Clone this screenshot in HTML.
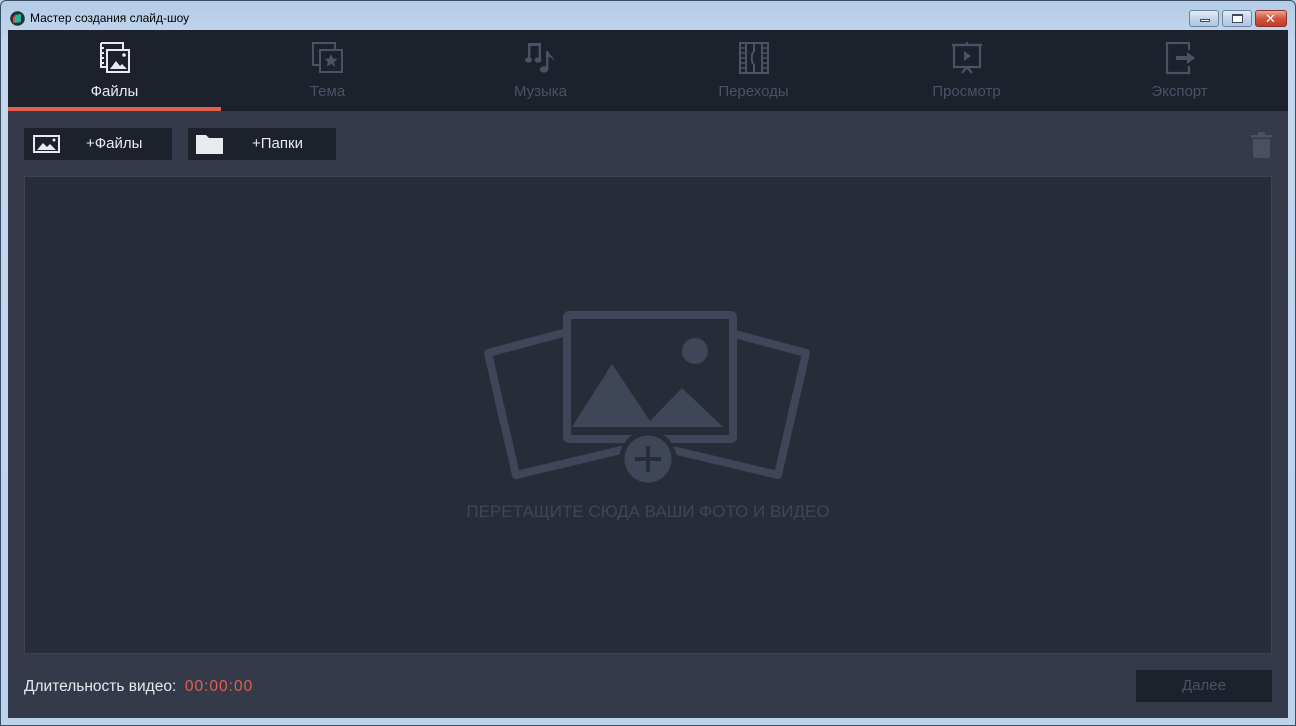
<!DOCTYPE html>
<html><head><meta charset="utf-8"><style>
*{margin:0;padding:0;box-sizing:border-box}
body{width:1296px;height:726px;overflow:hidden;background:#b9d1ea;font-family:"Liberation Sans","DejaVu Sans",sans-serif;position:relative}
.frame{position:absolute;left:0;top:0;width:1296px;height:726px;background:linear-gradient(#b4cce6,#c3d7ee 40px,#bcd3ec);border:1px solid #3c4e66;border-radius:6px 6px 0 0}
.title{position:absolute;left:30px;top:11px;font-size:12px;color:#000}
.app{position:absolute;left:8px;top:30px;width:1280px;height:688px;background:#343a4a}
.hdr{position:absolute;left:0;top:0;width:1280px;height:81px;background:#1d212b}
.tab{position:absolute;top:0;width:213px;height:81px;text-align:center}
.tab svg{position:absolute;left:50%;top:10px;margin-left:-18px}
.tab span{position:absolute;left:0;right:0;top:53px;font-size:15px;color:#4a5266}
.tab.act span{color:#e8eaf0}
.ul{position:absolute;left:0;top:77px;width:213px;height:4px;background:#e4604c}
.btn{position:absolute;top:98px;height:32px;background:#1d212b;color:#e8eaf0;font-size:15px}
.drop{position:absolute;left:16px;top:146px;width:1248px;height:478px;background:#272c38;border:1px solid #3d4352}
.cap{position:absolute;left:0;right:0;top:325px;text-align:center;font-size:17px;color:#3f4658}
.wb{position:absolute;top:10px;height:17px;border:1px solid #6d84a3;border-radius:3px;background:linear-gradient(#e4edf7,#c4d4e8 50%,#b1c6df)}
</style></head><body>
<div class="frame"></div>
<svg style="position:absolute;left:10px;top:11px" width="15" height="15" viewBox="0 0 15 15"><circle cx="7.5" cy="7.5" r="7.3" fill="#2a3038"/><path d="M5 4l6-1v8l-6 1z" fill="#1fb89a"/><path d="M3 6l2-1v6l-2 1z" fill="#e0503c"/></svg>
<div class="title">Мастер создания слайд-шоу</div>
<div class="wb" style="left:1189px;width:30px"><div style="position:absolute;left:10px;top:8px;width:10px;height:3px;border:1px solid #3a4a60;background:#fff"></div></div>
<div class="wb" style="left:1222px;width:30px"><div style="position:absolute;left:9px;top:3px;width:11px;height:9px;border:1px solid #3a4a60;border-top-width:2px;background:#fff"></div></div>
<div class="wb" style="left:1255px;width:32px;border-color:#8a3328;background:linear-gradient(#e8a89a,#d2543e 50%,#c23c26)"><div style="position:absolute;left:9px;top:0;color:#fff;font-weight:bold;font-size:13px">✕</div></div>
<div class="app">
 <div class="hdr">
  <div class="tab act" style="left:0"><svg width="36" height="36" viewBox="0 0 36 36" fill="none" stroke="#e8eaf0" stroke-width="2"><path d="M4 3h22v6M4 3v24h6M4 8h3M4 13h3M4 18h3M4 23h3M26 3v6"/><rect x="10" y="10" width="22" height="22"/><path d="M13 29l6-8 4 5 2-2 5 5z" fill="#e8eaf0" stroke="none"/><circle cx="27" cy="15" r="1.8" fill="#e8eaf0" stroke="none"/></svg><span>Файлы</span></div>
  <div class="tab" style="left:213px"><svg width="36" height="36" viewBox="0 0 36 36" fill="none" stroke="#4a5266" stroke-width="2"><path d="M25 10V3H3v22h7"/><rect x="10" y="10" width="22" height="22"/><path d="M21 14l2 4.5 4.8.4-3.7 3.1 1.2 4.7L21 24l-4.3 2.7 1.2-4.7-3.7-3.1 4.8-.4z" fill="#4a5266" stroke="none"/></svg><span>Тема</span></div>
  <div class="tab" style="left:426px"><svg width="36" height="36" viewBox="0 0 36 36" fill="#4a5266"><path d="M5 3h13v16h-2.4V6H7.4v13H5z"/><ellipse cx="5.5" cy="20" rx="3.5" ry="2.6"/><ellipse cx="15" cy="20" rx="3.5" ry="2.6"/><path d="M23 11h2.4c0 4 6 5 5 10-1-3-3-4-5-4v12H23z"/><ellipse cx="21" cy="29.5" rx="4.2" ry="3.2"/></svg><span>Музыка</span></div>
  <div class="tab" style="left:639px"><svg width="36" height="36" viewBox="0 0 36 36" fill="none" stroke="#4a5266" stroke-width="2"><rect x="4" y="3" width="28" height="30"/><path d="M10 3v30M26 3v30M18 3v9M18 24v9M18 12c-3 0-3 12 0 12" /><path d="M4 8h6M4 13h6M4 18h6M4 23h6M4 28h6M26 8h6M26 13h6M26 18h6M26 23h6M26 28h6" stroke-width="1.5"/></svg><span>Переходы</span></div>
  <div class="tab" style="left:852px"><svg width="36" height="36" viewBox="0 0 36 36" fill="none" stroke="#4a5266" stroke-width="2.2"><path d="M3 5h30M18 2v3"/><rect x="5" y="5" width="26" height="22"/><path d="M15 11l7 5-7 5z" fill="#4a5266" stroke="none"/><path d="M18 27l-5 6M18 27l5 6"/></svg><span>Просмотр</span></div>
  <div class="tab" style="left:1065px"><svg width="36" height="36" viewBox="0 0 36 36" fill="none" stroke="#4a5266" stroke-width="2.2"><path d="M27 10V3H5v30h22v-7"/><path d="M14 18h12" stroke-width="4"/><path d="M25 12l8 6-8 6z" fill="#4a5266" stroke="none"/></svg><span>Экспорт</span></div>
  <div class="ul"></div>
 </div>
 <div class="btn" style="left:16px;width:148px"><svg style="position:absolute;left:9px;top:7px" width="27" height="18" viewBox="0 0 27 18" fill="none" stroke="#e8eaf0" stroke-width="2"><rect x="1" y="1" width="25" height="16"/><path d="M4 15l6-7 4 4 3-3 6 6z" fill="#e8eaf0" stroke="none"/><circle cx="21" cy="5" r="1.5" fill="#e8eaf0" stroke="none"/></svg><span style="position:absolute;left:62px;top:7px">+Файлы</span></div>
 <div class="btn" style="left:180px;width:148px"><svg style="position:absolute;left:8px;top:6px" width="27" height="20" viewBox="0 0 27 20"><path d="M0 1h10l3 3h14v16H0z" fill="#e8eaf0"/></svg><span style="position:absolute;left:64px;top:7px">+Папки</span></div>
 <svg style="position:absolute;left:1243px;top:102px" width="22" height="26" viewBox="0 0 22 26" fill="#4a5064"><rect x="0" y="3" width="21" height="2.5"/><rect x="7" y="0" width="7" height="3"/><path d="M2 7h17v17l-1 2H3l-1-2z"/></svg>
 <div class="drop">
  <svg style="position:absolute;left:454px;top:133px" width="336" height="178" viewBox="0 0 336 178" fill="none" stroke="#3f4658" stroke-width="8" stroke-linejoin="round">
   <path d="M88 22L9 43l28 122 139-33"/>
   <path d="M248 22l79 21-28 122-139-33"/>
   <rect x="88" y="5" width="166" height="124" rx="2" fill="#272c38"/>
   <path d="M93 117l40-63 38 57 32-33 41 39z" fill="#3f4658" stroke="none"/>
   <circle cx="216" cy="41" r="13" fill="#3f4658" stroke="none"/>
   <circle cx="169" cy="149" r="26" fill="#3f4658" stroke="#272c38" stroke-width="5"/>
   <path d="M169 136v26M156 149h26" stroke="#272c38" stroke-width="4"/>
  </svg>
  <div class="cap">ПЕРЕТАЩИТЕ СЮДА ВАШИ ФОТО И ВИДЕО</div>
 </div>
 <div style="position:absolute;left:16px;top:648px;font-size:15.5px;color:#e8eaf0">Длительность видео:&nbsp; <span style="color:#e4604c;letter-spacing:1px">00:00:00</span></div>
 <div style="position:absolute;left:1128px;top:640px;width:136px;height:32px;background:#1d212b;color:#4a5266;font-size:15px;text-align:center;line-height:32px">Далее</div>
</div>
</body></html>
